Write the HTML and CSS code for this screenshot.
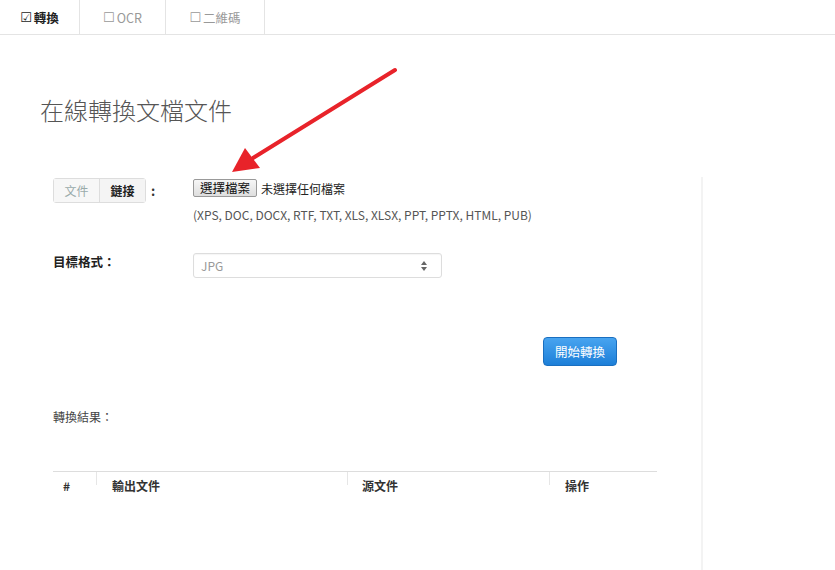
FILE: index.html
```html
<!DOCTYPE html>
<html>
<head>
<meta charset="utf-8">
<link rel="stylesheet" href="styles.css">
</head>
<body>
<nav class="tabs">
  <div class="tab active"><span class="box">☑</span> 轉換</div>
  <div class="tab"><span class="box">☐</span> OCR</div>
  <div class="tab"><span class="box">☐</span>二維碼</div>
</nav>
<main class="page">
  <h1 class="title">在線轉換文檔文件</h1>
  <div class="body">
    <div class="form">
      <div class="row row-file">
        <div class="label">
          <div class="seg"><span class="seg-btn seg-off">文件</span><span class="seg-btn seg-on">鏈接</span></div>
          <span class="colon">:</span>
        </div>
        <div class="field">
          <div class="file"><span class="file-btn">選擇檔案</span><span class="file-name">未選擇任何檔案</span></div>
          <div class="hint">(XPS, DOC, DOCX, RTF, TXT, XLS, XLSX, PPT, PPTX, HTML, PUB)</div>
        </div>
      </div>
      <div class="row row-fmt">
        <div class="label bold">目標格式：</div>
        <div class="field">
          <div class="select"><span>JPG</span>
            <svg class="arrows" width="6" height="10" viewBox="0 0 6 10"><polygon points="3,0 6,4 0,4" fill="#666"/><polygon points="0,6 6,6 3,10" fill="#666"/></svg>
          </div>
        </div>
      </div>
      <div class="actions"><button class="go">開始轉換</button></div>
      <div class="result">轉換結果：</div>
      <table class="tbl">
        <thead><tr><th class="c1">#</th><th class="c2">輸出文件</th><th class="c3">源文件</th><th class="c4">操作</th></tr></thead>
      </table>
    </div>
    <div class="side"></div>
  </div>
  <svg class="arrow" width="190" height="125" viewBox="0 0 190 125">
    <line x1="175" y1="10" x2="33" y2="98" stroke="#e8232a" stroke-width="4" stroke-linecap="round"/>
    <polygon points="12,112 25,88 40,108" fill="#e8232a"/>
  </svg>
</main>
</body>
</html>
```
FILE: styles.css
```css
html, body { margin: 0; padding: 0; background: #fff; }
body { font-family: "Noto Sans CJK TC", "Open Sans", sans-serif; font-size: 12px; color: #333; width: 835px; height: 570px; overflow: hidden; }
.tabs { display: flex; height: 34px; border-bottom: 1px solid #e4e4e4; }
.tab { display: flex; align-items: center; justify-content: center; border-right: 1px solid #e4e4e4; color: #999; font-size: 12.5px; height: 34px; }
.tab:nth-child(1) { width: 79px; color: #222; font-weight: bold; }
.tab:nth-child(2) { width: 85px; }
.tab:nth-child(3) { width: 98px; }
.box { font-size: 13px; margin-right: 2px; font-family: "DejaVu Sans", sans-serif; }
.page { position: relative; padding-left: 40px; }
.title { margin: 0; padding-top: 58px; font-size: 24px; font-weight: 300; color: #555; line-height: 34px; }
.body { display: flex; margin-top: 51px; }
.form { width: 616px; padding-left: 13px; }
.side { border-left: 2px solid #f3f3f3; margin-left: 32px; height: 395px; margin-top: -1px; }
.row { display: flex; }
.label { width: 140px; display: flex; align-items: flex-start; }
.bold { font-weight: bold; color: #222; font-size: 12.5px; }
.seg { display: flex; border: 1px solid #ddd; border-radius: 3px; height: 23px; }
.seg-btn { display: flex; align-items: center; justify-content: center; width: 45px; font-size: 12px; }
.seg-off { background: #f7f7f7; color: #9aa; border-right: 1px solid #ddd; }
.seg-on { background: #f4f4f4; color: #222; font-weight: bold; }
.colon { font-weight: bold; margin-left: 5px; margin-top: 3px; color: #333; font-size: 13px; }
.file { display: flex; align-items: center; margin-top: 1px; }
.file-btn { border: 1px solid #999; background: linear-gradient(#f6f6f6, #dedede); padding: 0 6px; height: 16px; line-height: 16px; font-size: 12.5px; color: #111; border-radius: 2px; width: 50px; text-align: center; }
.file-name { margin-left: 4px; color: #222; font-size: 12px; }
.hint { margin-top: 9px; color: #555; font-size: 12px; }
.row-fmt { margin-top: 30px; }
.row-fmt .label { margin-top: -1px; }
.select { width: 226px; height: 23px; border: 1px solid #ddd; border-radius: 3px; display: flex; align-items: center; justify-content: space-between; padding: 0 14px 0 7px; color: #999; font-size: 12px; box-shadow: inset 0 1px 1px rgba(0,0,0,0.04); }
.arrows { display: block; }
.actions { display: flex; justify-content: flex-end; margin-top: 59px; padding-right: 52px; }
.go { font-family: inherit; font-size: 12.5px; color: #fff; background: linear-gradient(#48a4f0, #1d7fd8); border: 1px solid #1a6fc0; border-radius: 4px; width: 74px; height: 29px; padding: 0; }
.result { margin-top: 42px; font-size: 12px; color: #444; }
.tbl { margin-top: 46px; width: 604px; border-collapse: collapse; border-top: 1px solid #ddd; table-layout: fixed; }
.tbl th { box-sizing: border-box; text-align: left; font-size: 12px; font-weight: bold; color: #333; padding: 5px 0 6px; position: relative; }
.tbl th + th::before { content: ""; position: absolute; left: 0; top: 0; height: 13px; border-left: 1px solid #e6e6e6; }
.c1 { width: 43px; padding-left: 10px !important; }
.c2 { width: 251px; padding-left: 16px !important; }
.c3 { width: 202px; padding-left: 15px !important; }
.c4 { padding-left: 16px !important; }
.arrow { position: absolute; left: 220px; top: 25px; }
```
